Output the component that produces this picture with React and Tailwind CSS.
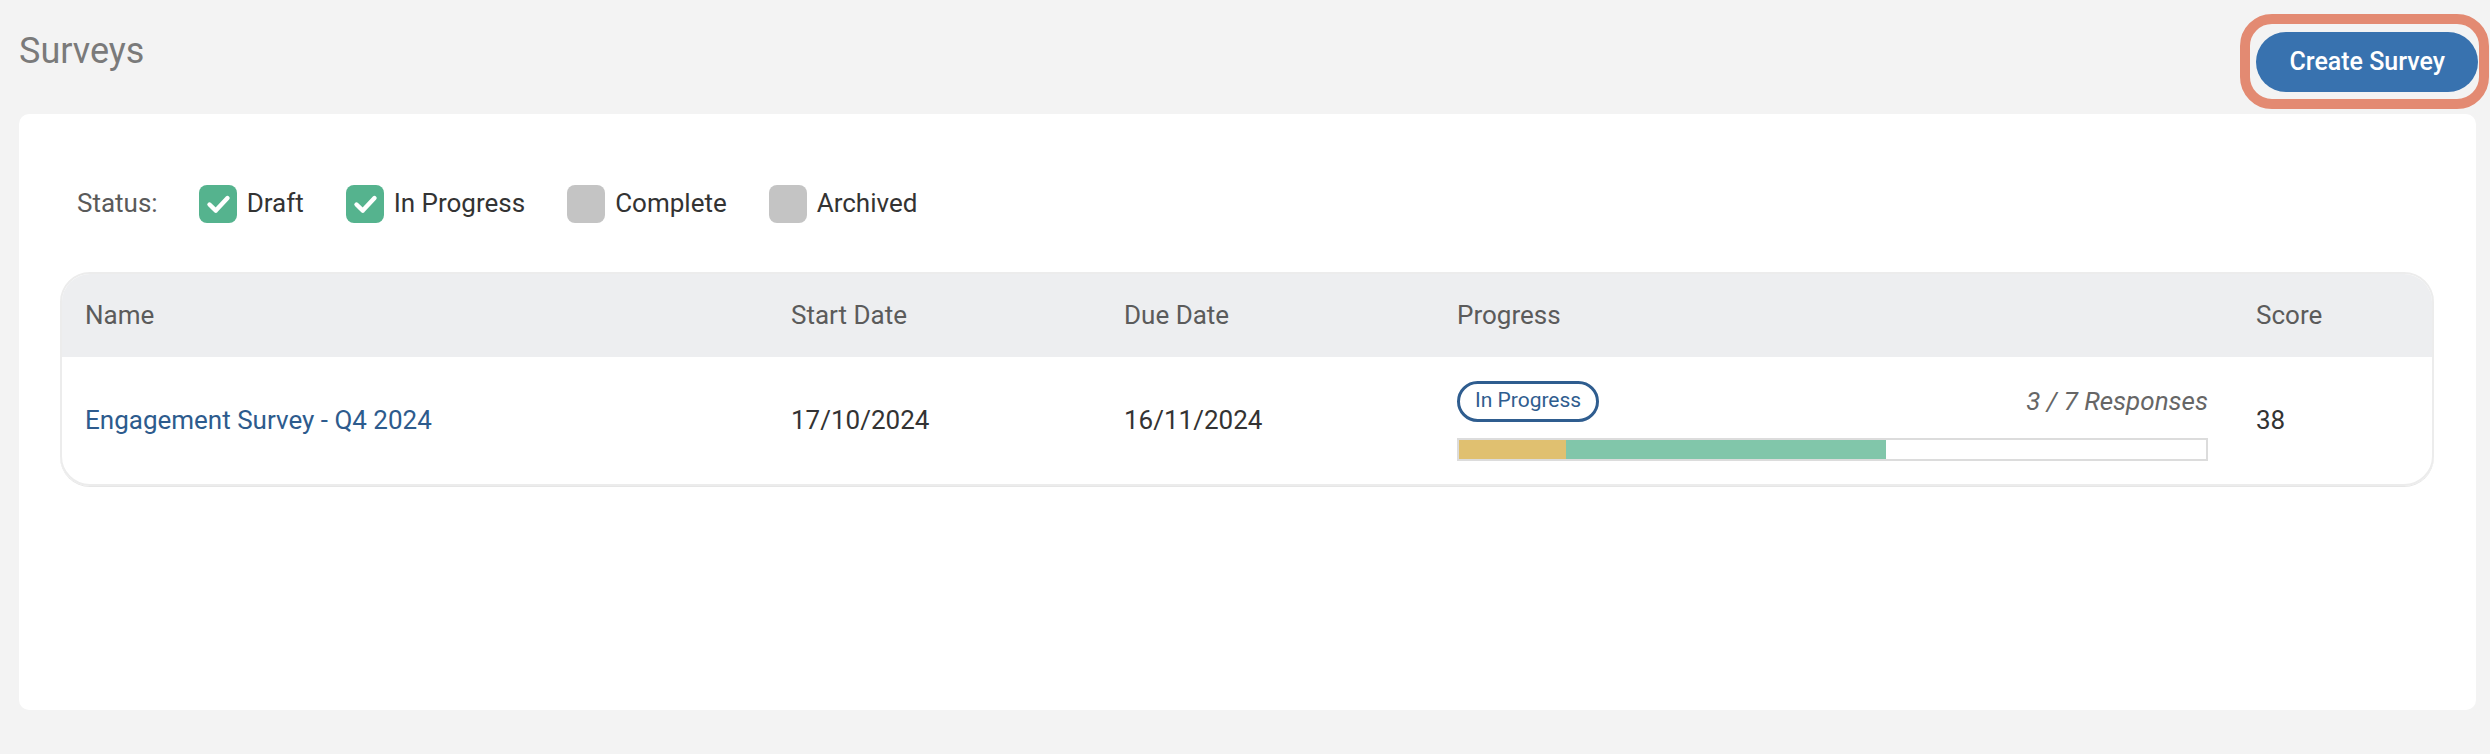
import React from "react";

const statusFilters = [
  { label: "Draft", checked: true },
  { label: "In Progress", checked: true },
  { label: "Complete", checked: false },
  { label: "Archived", checked: false },
];

const surveys = [
  {
    name: "Engagement Survey - Q4 2024",
    start: "17/10/2024",
    due: "16/11/2024",
    status: "In Progress",
    total: 7,
    responses: 3,
    partial: 1,
    score: 38,
  },
];

const Checkbox = ({ checked }) => (
  <span
    className={
      checked
        ? "flex h-[38px] w-[38px] items-center justify-center rounded-[8px] bg-[#55b38e]"
        : "flex h-[38px] w-[38px] items-center justify-center rounded-[8px] bg-[#c4c4c4]"
    }
  >
    {checked && (
      <svg width="38" height="38" viewBox="0 0 38 38" fill="none">
        <polyline
          points="10.5,19.5 16.8,25.6 28.5,13"
          stroke="#ffffff"
          strokeWidth="4.4"
          strokeLinecap="round"
          strokeLinejoin="round"
        />
      </svg>
    )}
  </span>
);

const ProgressCell = ({ row }) => {
  // 막대 비율 (partial: 노랑, responses: 초록)
  const partialPct = (row.partial / row.total) * 100;
  const donePct = (row.responses / row.total) * 100;
  return (
    <div className="flex w-[751px] flex-col gap-[16px]">
      <div className="flex items-center justify-between">
        <span className="flex h-[41px] items-center rounded-full border-[3px] border-[#2f5d8f] px-[15px] text-[21px] text-[#2f5d8f]">
          {row.status}
        </span>
        <span className="text-[26px] italic text-[#666666]">
          {row.responses} / {row.total} Responses
        </span>
      </div>
      <div className="flex h-[23px] border-2 border-[#dcdcdc] bg-white">
        <div className="h-full bg-[#e0c070]" style={{ width: `${partialPct}%` }} />
        <div className="h-full bg-[#81c6aa]" style={{ width: `${donePct}%` }} />
      </div>
    </div>
  );
};

const cols = "grid grid-cols-[704px_333px_333px_799px_1fr]";

const App = () => {
  return (
    <div className="min-h-screen w-full bg-[#f3f3f3] pl-[19px] pr-[14px] font-['Roboto',sans-serif]">
      {/* 상단 타이틀 + 버튼 */}
      <div className="flex items-start justify-between pt-[32px] -mr-[2px]">
        <h1 className="mt-[1px] text-[36px] leading-[36px] text-[#7a7a7a]">Surveys</h1>
        <div className="relative">
          <button className="h-[60px] rounded-full bg-[#3872af] px-[33px] text-[25px] font-medium text-white">
            Create Survey
          </button>
          <span className="pointer-events-none absolute -bottom-[17px] -left-[16px] -right-[11px] -top-[18px] rounded-[32px] border-[10px] border-[#e38a72]" />
        </div>
      </div>

      {/* 카드 */}
      <div className="mt-[22px] h-[596px] rounded-[10px] bg-white pl-[41px] pr-[42px] pt-[70px]">
        <div className="ml-[17px] flex items-center gap-[41px]">
          <span className="text-[26px] text-[#5a5a5a]">Status:</span>
          <div className="flex items-center gap-[42px]">
            {statusFilters.map((f) => (
              <label key={f.label} className="flex items-center gap-[10px]">
                <Checkbox checked={f.checked} />
                <span className="text-[26px] text-[#333333]">{f.label}</span>
              </label>
            ))}
          </div>
        </div>

        <div className="mt-[49px] overflow-hidden rounded-[30px] border-2 border-[#ececec] shadow-[0_1px_0_#e6e6e6]">
          <div className={`${cols} h-[83px] items-center bg-[#edeef0] text-[26px] text-[#5b5b5b]`}>
            <div className="pl-[23px]">Name</div>
            <div className="pl-[25px]">Start Date</div>
            <div className="pl-[25px]">Due Date</div>
            <div className="pl-[25px]">Progress</div>
            <div className="pl-[25px]">Score</div>
          </div>
          {surveys.map((row) => (
            <div key={row.name} className={`${cols} h-[127px] items-center text-[26px] text-[#333333]`}>
              <div className="pl-[23px] text-[#2d5b8d]">{row.name}</div>
              <div className="pl-[25px]">{row.start}</div>
              <div className="pl-[25px]">{row.due}</div>
              <div className="pl-[25px]">
                <ProgressCell row={row} />
              </div>
              <div className="pl-[25px]">{row.score}</div>
            </div>
          ))}
        </div>
      </div>
    </div>
  );
};

export default App;
